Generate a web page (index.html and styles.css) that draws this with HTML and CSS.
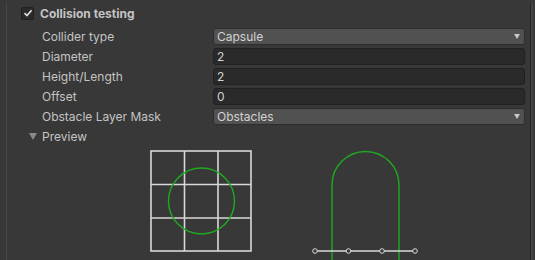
FILE: index.html
```html
<!DOCTYPE html>
<html>
<head>
<meta charset="utf-8">
<link rel="stylesheet" href="styles.css">
</head>
<body>
<div class="inspector">
  <div class="header">
    <span class="checkbox">
      <svg width="10" height="10" viewBox="0 0 10 10"><path d="M1.5 5.2 L4 7.6 L8.6 2.2" fill="none" stroke="#e0e0e0" stroke-width="1.6"/></svg>
    </span>
    <span class="title">Collision testing</span>
  </div>
  <div class="rows">
    <div class="row"><span class="label">Collider type</span><div class="dropdown"><span>Capsule</span><span class="arrow"></span></div></div>
    <div class="row"><span class="label">Diameter</span><div class="input">2</div></div>
    <div class="row"><span class="label">Height/Length</span><div class="input">2</div></div>
    <div class="row"><span class="label">Offset</span><div class="input">0</div></div>
    <div class="row"><span class="label">Obstacle Layer Mask</span><div class="dropdown"><span>Obstacles</span><span class="arrow"></span></div></div>
  </div>
  <div class="foldout"><span class="fold-arrow"></span><span>Preview</span></div>
  <svg class="preview" width="523" height="114" viewBox="7 146 523 114">
    <g stroke="#d8d8d8" stroke-width="1.6" fill="none">
      <rect x="151" y="151" width="100" height="100"/>
      <line x1="184.5" y1="151" x2="184.5" y2="251"/>
      <line x1="218" y1="151" x2="218" y2="251"/>
      <line x1="151" y1="184.5" x2="251" y2="184.5"/>
      <line x1="151" y1="218" x2="251" y2="218"/>
    </g>
    <circle cx="201.5" cy="201" r="33" stroke="#1faa22" stroke-width="1.4" fill="none"/>
    <path d="M332 262 L332 185 A33.5 33.5 0 0 1 399 185 L399 262" stroke="#1faa22" stroke-width="1.4" fill="none"/>
    <line x1="315" y1="251" x2="415" y2="251" stroke="#d8d8d8" stroke-width="1.4"/>
    <g stroke="#d8d8d8" stroke-width="1" fill="#383838">
      <circle cx="315" cy="251" r="2.3"/>
      <circle cx="348.5" cy="251" r="2.3"/>
      <circle cx="382" cy="251" r="2.3"/>
      <circle cx="415" cy="251" r="2.3"/>
    </g>
  </svg>
</div>
</body>
</html>
```
FILE: styles.css
```css
html, body {
  margin: 0;
  padding: 0;
  background: #383838;
  width: 535px;
  height: 260px;
  overflow: hidden;
}
body {
  font-family: Inter, "Noto Sans", sans-serif;
  font-size: 12px;
  color: #c4c4c4;
}
.inspector {
  margin-left: 6px;
  width: 523px;
  height: 260px;
  border-left: 1px solid #474747;
  border-right: 1px solid #232323;
  box-shadow: 2px 0 0 #454545;
}
.header {
  height: 20px;
  margin-top: 3px;
  display: flex;
  align-items: center;
  padding-left: 14px;
}
.checkbox {
  width: 13px;
  height: 13px;
  box-sizing: border-box;
  background: #2a2a2a;
  border: 1px solid #212121;
  border-radius: 2px;
  display: flex;
  align-items: center;
  justify-content: center;
}
.title {
  font-weight: 700;
  margin-left: 6px;
}
.rows {
  margin-top: 3px;
}
.row {
  height: 20px;
  display: flex;
  align-items: center;
  padding-left: 35px;
}
.label {
  width: 171px;
  flex: none;
}
.dropdown, .input {
  width: 312px;
  height: 17px;
  box-sizing: border-box;
  border-radius: 3px;
  display: flex;
  align-items: center;
  padding-left: 3px;
  color: #d2d2d2;
}
.dropdown {
  background: #515151;
  border: 1px solid #2d2d2d;
  justify-content: space-between;
  padding-right: 4px;
}
.input {
  background: #2a2a2a;
  border: 1px solid #212121;
}
.arrow {
  width: 0;
  height: 0;
  border-left: 3.5px solid transparent;
  border-right: 3.5px solid transparent;
  border-top: 5px solid #c8c8c8;
}
.foldout {
  height: 20px;
  display: flex;
  align-items: center;
  padding-left: 22px;
}
.fold-arrow {
  width: 0;
  height: 0;
  border-left: 4px solid transparent;
  border-right: 4px solid transparent;
  border-top: 7px solid #8a8a8a;
  margin-right: 5px;
}
.preview {
  display: block;
}
```
